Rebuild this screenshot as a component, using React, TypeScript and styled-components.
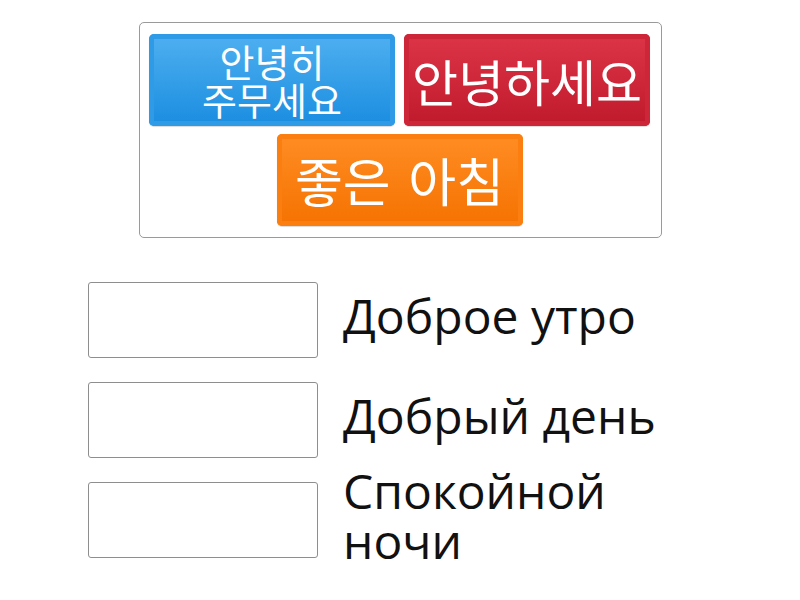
import styled, { createGlobalStyle } from 'styled-components';

const GlobalStyle = createGlobalStyle`
  html, body {
    margin: 0;
    padding: 0;
    background: #ffffff;
  }
`;

type Tone = 'blue' | 'red' | 'orange';

const tones: Record<Tone, { top: string; bottom: string; edge: string }> = {
    blue: { top: '#4fb0f0', bottom: '#1a8de0', edge: '#2f9ae6' },
    red: { top: '#dc3547', bottom: '#bf1a2c', edge: '#cc2638' },
    orange: { top: '#ff8d24', bottom: '#f57200', edge: '#fb7f10' },
};

const Page = styled.div`
    width: 800px;
    height: 600px;
    display: flex;
    flex-direction: column;
    align-items: center;
    padding-top: 22px;
    box-sizing: border-box;
    font-family: 'Open Sans', 'Noto Sans CJK KR', sans-serif;
`;

const Tray = styled.div`
    width: 523px;
    height: 216px;
    box-sizing: border-box;
    border: 1px solid #9a9a9a;
    border-radius: 5px;
    padding: 11px 10px 9px 9px;
    display: flex;
    flex-wrap: wrap;
    justify-content: center;
    align-content: flex-start;
    column-gap: 9px;
    row-gap: 8px;
`;

const Tile = styled.div<{ $tone: Tone; $size: number; $lead: number }>`
    width: 246px;
    height: 92px;
    box-sizing: border-box;
    border-radius: 5px;
    background: linear-gradient(${(p) => tones[p.$tone].top}, ${(p) => tones[p.$tone].bottom});
    box-shadow: inset 0 0 0 5px ${(p) => tones[p.$tone].edge}, 0 1px 1px rgba(0, 0, 0, 0.15);
    display: flex;
    align-items: center;
    justify-content: center;
    text-align: center;
    color: #ffffff;
    font-family: 'Noto Sans CJK KR', sans-serif;
    font-size: ${(p) => p.$size}px;
    line-height: ${(p) => p.$lead}px;
    word-spacing: 6px;
    white-space: nowrap;
    padding: 0 4px;
`;

const Rows = styled.div`
    margin-top: 44px;
    width: 800px;
    display: flex;
    flex-direction: column;
    gap: 24px;
    padding-left: 88px;
    box-sizing: border-box;
`;

const Row = styled.div`
    height: 76px;
    display: flex;
    align-items: center;
    gap: 25px;
`;

const Slot = styled.div`
    width: 230px;
    height: 76px;
    flex-shrink: 0;
    box-sizing: border-box;
    border: 1px solid #8e8e8e;
    border-radius: 3px;
    background: #ffffff;
`;

const Label = styled.div`
    font-family: 'Open Sans', sans-serif;
    font-size: 48px;
    line-height: 50px;
    color: #111111;
    white-space: nowrap;
    margin-bottom: 9px;
`;

const tiles: { text: string[]; tone: Tone; size: number; lead: number }[] = [
    { text: ['안녕히', '주무세요'], tone: 'blue', size: 38, lead: 38 },
    { text: ['안녕하세요'], tone: 'red', size: 50, lead: 56 },
    { text: ['좋은 아침'], tone: 'orange', size: 52, lead: 56 },
];

const answers = [['Доброе утро'], ['Добрый день'], ['Спокойной', 'ночи']];

export default function App() {
    return (
        <Page>
            <GlobalStyle />
            <Tray>
                {tiles.map((t) => (
                    <Tile key={t.text.join()} $tone={t.tone} $size={t.size} $lead={t.lead}>
                        <div>
                            {t.text.map((line) => (
                                <div key={line}>{line}</div>
                            ))}
                        </div>
                    </Tile>
                ))}
            </Tray>
            <Rows>
                {answers.map((a) => (
                    <Row key={a.join()}>
                        <Slot />
                        <Label>
                            {a.map((line) => (
                                <div key={line}>{line}</div>
                            ))}
                        </Label>
                    </Row>
                ))}
            </Rows>
        </Page>
    );
}
